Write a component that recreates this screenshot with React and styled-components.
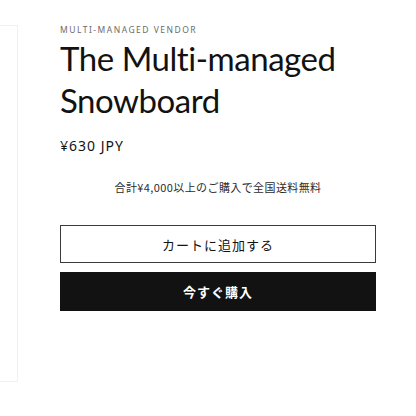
import React from "react"
import styled, { createGlobalStyle } from "styled-components"

const GlobalStyle = createGlobalStyle`
    html, body {
        margin: 0;
        padding: 0;
        background: #fff;
    }
    body {
        font-family: "Noto Sans", "Noto Sans CJK JP", sans-serif;
        color: #121212;
    }
`

const Page = styled.div`
    width: 416px;
    height: 416px;
    display: grid;
    grid-template-columns: 18px 1fr;
    column-gap: 42px;
    padding-top: 25px;
    box-sizing: border-box;
    overflow: hidden;
`

const Media = styled.div`
    height: 357px;
    border: 1px solid #f0f0f0;
    border-left: none;
    box-sizing: border-box;
`

const Info = styled.div`
    width: 316px;
    display: flex;
    flex-direction: column;
`

const Vendor = styled.p`
    margin: 0;
    font-size: 8.5px;
    letter-spacing: 1.5px;
    color: #6b6b6b;
    line-height: 10px;
`

const Title = styled.h1`
    margin: 2px 0 0;
    font-family: Lato, "Noto Sans", sans-serif;
    font-size: 33px;
    font-weight: 400;
    line-height: 42px;
    letter-spacing: -0.45px;
`

const Price = styled.div`
    margin-top: 15px;
    font-size: 14px;
    letter-spacing: 1px;
    line-height: 20px;
`

const Shipping = styled.p`
    margin: 23px 0 0;
    text-align: center;
    font-family: "Noto Sans CJK JP", sans-serif;
    font-size: 11px;
    line-height: 16px;
    letter-spacing: 0.4px;
    color: #2b2b2b;
`

const Actions = styled.div`
    margin-top: 30px;
    display: flex;
    flex-direction: column;
    gap: 9px;
`

const Button = styled.button`
    height: ${({ primary }) => (primary ? "39px" : "38px")};
    width: 100%;
    margin: 0;
    font-family: "Noto Sans CJK JP", sans-serif;
    font-size: 13px;
    letter-spacing: 1px;
    cursor: pointer;
    font-weight: ${({ primary }) => (primary ? 700 : 400)};
    color: ${({ primary }) => (primary ? "#fff" : "#121212")};
    background: ${({ primary }) => (primary ? "#121212" : "#fff")};
    border: ${({ primary }) => (primary ? "none" : "1px solid #3a3a3a")};
`

export default function App() {
    return (
        <>
            <GlobalStyle />
            <Page>
                <Media />
                <Info>
                    <Vendor>MULTI-MANAGED VENDOR</Vendor>
                    <Title>The Multi-managed Snowboard</Title>
                    <Price>¥630 JPY</Price>
                    <Shipping>合計¥4,000以上のご購入で全国送料無料</Shipping>
                    <Actions>
                        <Button>カートに追加する</Button>
                        <Button primary>今すぐ購入</Button>
                    </Actions>
                </Info>
            </Page>
        </>
    )
}
